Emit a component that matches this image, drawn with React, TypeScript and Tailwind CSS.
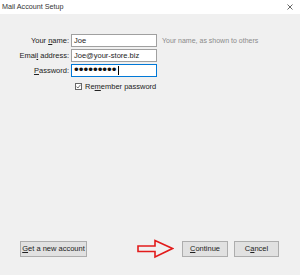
import React from "react";

const font = { fontFamily: '"Liberation Sans", Arial, sans-serif' };

function Btn({ children, w }: { children: React.ReactNode; w: string }) {
  return (
    <div
      className={`${w} h-[16px] flex items-center justify-center bg-[#e1e1e1] border border-[#adadad] text-[7.5px] text-[#222] leading-none`}
    >
      {children}
    </div>
  );
}

function Field({ label, children, focused }: { label: React.ReactNode; children: React.ReactNode; focused?: boolean }) {
  return (
    <div className="flex items-center h-[13px]">
      <div className="w-[69px] text-right text-[7.5px] text-[#222] leading-none">{label}</div>
      <div
        className={`ml-[2px] w-[86px] h-[13px] bg-white border ${focused ? "border-[#0078d7]" : "border-[#a0a0a0]"} flex items-center px-[2px] text-[7.5px] text-[#222] leading-none`}
      >
        {children}
      </div>
    </div>
  );
}

export default function App() {
  return (
    <div className="w-[300px] h-[275px] flex flex-col bg-[#f0f0f0] overflow-hidden" style={font}>
      <div className="h-[14px] bg-white flex items-center justify-between pl-[2px] pr-[7px]">
        <span className="text-[7.2px] text-[#333] leading-none">Mail Account Setup</span>
        <svg width="6" height="6" viewBox="0 0 6 6">
          <path d="M0.5 0.5L5.5 5.5M5.5 0.5L0.5 5.5" stroke="#555" strokeWidth="0.9" />
        </svg>
      </div>
      <div className="flex-1 flex flex-col">
        <div className="mt-[20px] flex flex-col gap-[2px]">
          <div className="flex items-center">
            <Field label={<>Your <u>n</u>ame:</>}>Joe</Field>
            <span className="ml-[5px] text-[7px] text-[#8a8a8a] leading-none">Your name, as shown to others</span>
          </div>
          <Field label={<>Emai<u>l</u> address:</>}>Joe@your-store.biz</Field>
          <Field label={<><u>P</u>assword:</>} focused>
            <span className="text-[13.5px] leading-none text-[#111] -mt-[1px]">•••••••••</span>
            <span className="ml-[1px] w-[1px] h-[9px] bg-black" />
          </Field>
        </div>
        <div className="mt-[6px] ml-[75px] flex items-center gap-[3px]">
          <div className="w-[7px] h-[7px] border border-[#666] bg-white flex items-center justify-center">
            <svg width="5" height="5" viewBox="0 0 5 5">
              <path d="M0.5 2.6L1.9 4L4.5 0.8" stroke="#333" strokeWidth="0.7" fill="none" />
            </svg>
          </div>
          <span className="text-[7.5px] text-[#222] leading-none">Re<u>m</u>ember password</span>
        </div>
        <div className="flex-1" />
        <div className="mb-[18px] flex items-center h-[16px]">
          <div className="ml-[20px]">
            <Btn w="w-[67px]"><u>G</u>et a new account</Btn>
          </div>
          <svg className="ml-[50px]" width="37" height="20" viewBox="0 0 37 20">
            <path
              d="M1 7H18V1.5L35.5 9.5L18 18V12.5H1Z"
              fill="none"
              stroke="#e21b1b"
              strokeWidth="1.6"
              strokeLinejoin="miter"
            />
          </svg>
          <div className="ml-[8px]">
            <Btn w="w-[46px]"><u>C</u>ontinue</Btn>
          </div>
          <div className="ml-[6px]">
            <Btn w="w-[45px]">C<u>a</u>ncel</Btn>
          </div>
        </div>
      </div>
    </div>
  );
}
